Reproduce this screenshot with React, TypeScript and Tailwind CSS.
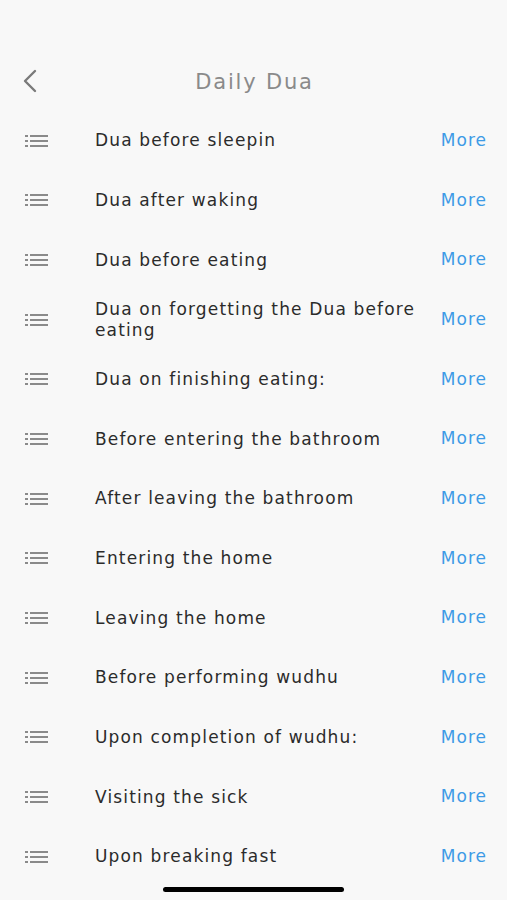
const items = [
  'Dua before sleepin',
  'Dua after waking',
  'Dua before eating',
  'Dua on forgetting the Dua before eating',
  'Dua on finishing eating:',
  'Before entering the bathroom',
  'After leaving the bathroom',
  'Entering the home',
  'Leaving the home',
  'Before performing wudhu',
  'Upon completion of wudhu:',
  'Visiting the sick',
  'Upon breaking fast',
]

function ListIcon() {
  return (
    <svg width="26" height="16" viewBox="0 0 26 16" className="shrink-0">
      <g fill="#8a8a8a">
        <rect x="1" y="2" width="3" height="2" />
        <rect x="1" y="7" width="3" height="2" />
        <rect x="1" y="12" width="3" height="2" />
        <rect x="6" y="2" width="18" height="2" />
        <rect x="6" y="7" width="18" height="2" />
        <rect x="6" y="12" width="18" height="2" />
      </g>
    </svg>
  )
}

export default function App() {
  return (
    <div
      className="w-[507px] h-[900px] bg-[#f8f8f8] flex flex-col overflow-hidden"
      style={{ fontFamily: '"DejaVu Sans", sans-serif' }}
    >
      <div className="h-[111px] pt-[59px] relative flex justify-center">
        <svg width="18" height="24" viewBox="0 0 18 24" className="absolute left-[21px] top-[69px]">
          <path d="M14 2 L4 12 L14 22" fill="none" stroke="#7a7a7a" strokeWidth="2.4" strokeLinecap="round" strokeLinejoin="round" />
        </svg>
        <span className="text-[21px] leading-[46px] text-[#8a8a8a] tracking-[1.8px] ml-[2px]">Daily Dua</span>
      </div>
      <ul className="flex flex-col">
        {items.map((t) => (
          <li key={t} className="h-[59.67px] flex items-center pl-[24px] pr-[20px]">
            <ListIcon />
            <span className="ml-[45px] flex-1 text-[17px] leading-[21px] text-[#2b2b2b] tracking-[1.15px] pr-4">{t}</span>
            <span className="text-[17px] text-[#3d9be6] tracking-[1px]">More</span>
          </li>
        ))}
      </ul>
      <div className="mt-auto mb-[8px] mx-auto w-[181px] h-[5px] rounded-full bg-black" />
    </div>
  )
}
